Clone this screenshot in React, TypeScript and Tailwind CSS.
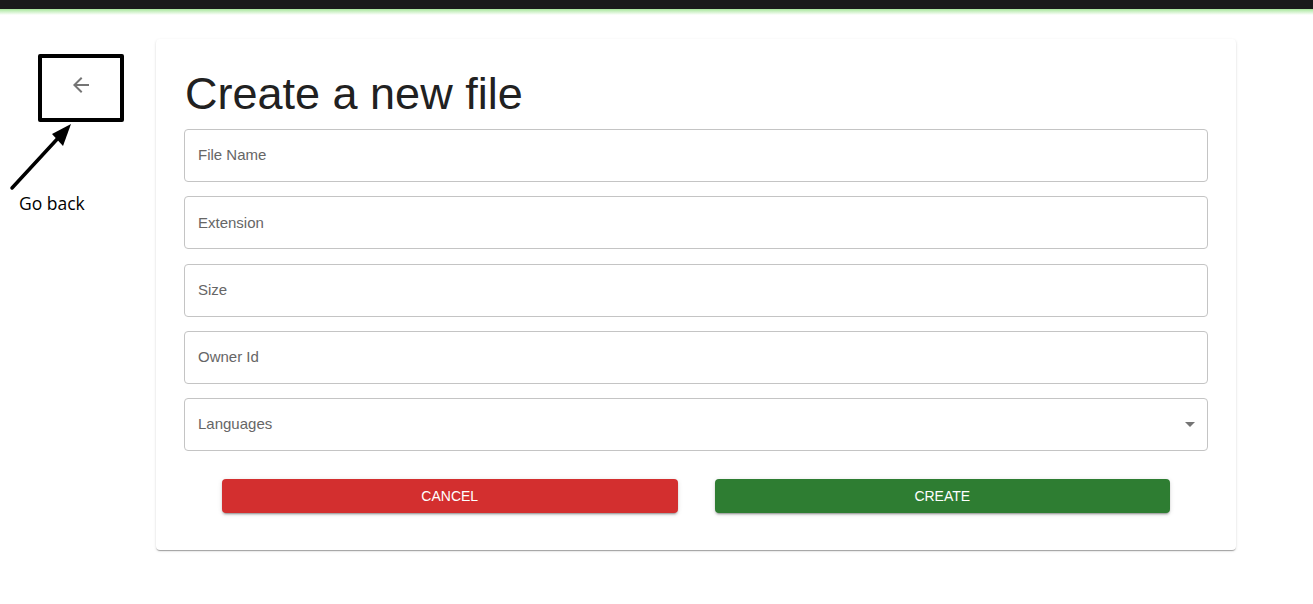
import React from "react";

const fields = ["File Name", "Extension", "Size", "Owner Id"];

export default function App() {
  return (
    <div className="relative min-h-[604px] w-full bg-white" style={{ fontFamily: '"Liberation Sans", Arial, sans-serif' }}>
      <div className="h-[9px] w-full bg-[#1a1a1a]" />
      <div className="h-[6px] w-full bg-gradient-to-b from-[#a6e59a] to-white" />

      <div className="flex pt-[24px]">
        <div className="w-[156px] shrink-0 relative">
          <button className="ml-[61px] mt-[26px] flex h-[40px] w-[40px] items-center justify-center rounded-full text-[#757575]">
            <svg width="24" height="24" viewBox="0 0 24 24" fill="currentColor">
              <path d="M20 11H7.83l5.59-5.59L12 4l-8 8 8 8 1.41-1.41L7.83 13H20v-2z" />
            </svg>
          </button>
        </div>

        <div className="w-[1080px] rounded-[4px] bg-white px-[28px] pt-[29px] pb-[37px] shadow-[0_2px_1px_-1px_rgba(0,0,0,0.2),0_1px_1px_0_rgba(0,0,0,0.14),0_1px_3px_0_rgba(0,0,0,0.12)]">
          <h1 className="ml-[1px] text-[45px] leading-[52px] text-[#212121]">Create a new file</h1>
          <div className="mt-[9px] flex flex-col gap-[14.25px]">
            {fields.map((f) => (
              <div key={f} className="flex h-[53px] items-center rounded-[4px] border border-[#c4c4c4] px-[13px] text-[15px] text-[#666666]">
                {f}
              </div>
            ))}
            <div className="flex h-[53px] items-center justify-between rounded-[4px] border border-[#c4c4c4] pl-[13px] pr-[12px] text-[15px] text-[#666666]">
              <span>Languages</span>
              <svg width="10" height="5" viewBox="0 0 10 5" fill="#757575">
                <path d="M0 0l5 5 5-5z" />
              </svg>
            </div>
          </div>
          <div className="mt-[28px] flex gap-[37px] px-[38px]">
            <button className="h-[34px] flex-1 rounded-[4px] bg-[#d32f2f] text-[14px] font-medium uppercase text-white shadow-[0_3px_1px_-2px_rgba(0,0,0,0.2),0_2px_2px_0_rgba(0,0,0,0.14),0_1px_5px_0_rgba(0,0,0,0.12)]">
              Cancel
            </button>
            <button className="h-[34px] flex-1 rounded-[4px] bg-[#2e7d32] text-[14px] font-medium uppercase text-white shadow-[0_3px_1px_-2px_rgba(0,0,0,0.2),0_2px_2px_0_rgba(0,0,0,0.14),0_1px_5px_0_rgba(0,0,0,0.12)]">
              Create
            </button>
          </div>
        </div>
      </div>

      {/* annotation */}
      <div className="absolute left-[38px] top-[54px] h-[68px] w-[86px] rounded-[2px] border-[4px] border-black" />
      <svg className="absolute left-0 top-0" width="120" height="200" viewBox="0 0 120 200">
        <line x1="12" y1="188" x2="60" y2="136" stroke="black" strokeWidth="3.5" strokeLinecap="round" />
        <polygon points="71,124 52,134 63,146" fill="black" />
      </svg>
      <div className="absolute left-[19px] top-[190px] text-[17.5px] text-black" style={{ fontFamily: '"Open Sans", sans-serif' }}>
        Go back
      </div>
    </div>
  );
}
